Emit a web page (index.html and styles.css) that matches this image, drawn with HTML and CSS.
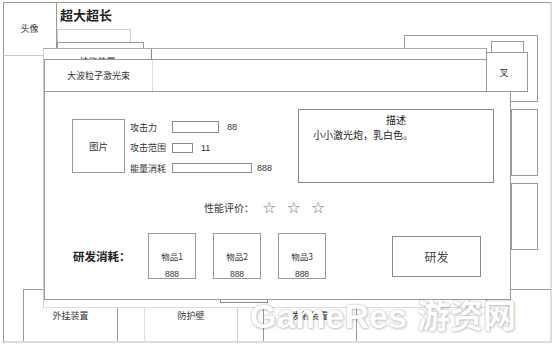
FILE: index.html
```html
<!DOCTYPE html>
<html lang="zh-CN">
<head>
<meta charset="UTF-8">
<title>研发界面</title>
<link rel="stylesheet" href="styles.css">
</head>
<body>
<div class="screen">
  <!-- main screen underneath -->
  <div class="frame"></div>
  <div class="avatar">头像</div>
  <h1 class="hero-name">超大超长</h1>
  <div class="name-bar"></div>
  <div class="level-bar"></div>

  <div class="side-panel side-top"></div>
  <div class="side-panel side-mid"></div>
  <div class="side-panel side-low"></div>

  <nav class="bottom-nav">
    <div class="nav-cell">外挂装置</div>
    <div class="nav-cell nav-gap"></div>
    <div class="nav-cell nav-light">防护壁</div>
    <div class="nav-cell"></div>
    <div class="nav-cell">发射装置</div>
    <div class="nav-cell nav-rest"></div>
  </nav>

  <!-- skill window behind the dialog -->
  <div class="back-window">
    <div class="back-tab">技能装置</div>
    <div class="back-slot"></div>
  </div>
  <div class="close-tab"></div>

  <!-- research dialog -->
  <div class="dialog">
    <div class="dialog-head">
      <div class="dialog-tab">大波粒子激光束</div>
    </div>
    <div class="dialog-body">
      <div class="info-row">
        <div class="pic">图片</div>
        <div class="stats">
          <div class="stat"><span class="stat-label">攻击力</span><span class="bar" style="width:47px;height:12px"></span><span class="stat-value">88</span></div>
          <div class="stat"><span class="stat-label">攻击范围</span><span class="bar" style="width:21px"></span><span class="stat-value">11</span></div>
          <div class="stat"><span class="stat-label">能量消耗</span><span class="bar" style="width:80px"></span><span class="stat-value short">888</span></div>
        </div>
        <div class="desc">
          <div class="desc-title">描述</div>
          <div class="desc-text">小小激光炮，乳白色。</div>
        </div>
      </div>

      <div class="rating">
        <span class="rating-label">性能评价：</span>
        <span class="star">☆</span><span class="star">☆</span><span class="star">☆</span>
      </div>

      <div class="cost-row">
        <div class="cost-label">研发消耗：</div>
        <div class="items">
          <div class="item"><div class="item-name">物品1</div><div class="item-num">888</div></div>
          <div class="item"><div class="item-name">物品2</div><div class="item-num">888</div></div>
          <div class="item"><div class="item-name">物品3</div><div class="item-num">888</div></div>
        </div>
        <button class="research-btn">研发</button>
      </div>
    </div>
  </div>
  <div class="close-btn">叉</div>

  <div class="watermark">GameRes<span class="wm-cn">游资网</span></div>
</div>
</body>
</html>
```

FILE: styles.css
```css
* {
  box-sizing: border-box;
}

body {
  margin: 0;
  background: #fff;
  font-family: "Noto Sans CJK SC", "Liberation Sans", sans-serif;
  color: #333;
}

.screen {
  position: relative;
  width: 554px;
  height: 346px;
  overflow: hidden;
}

/* main screen */
.frame {
  position: absolute;
  left: 3px;
  top: 2px;
  width: 549px;
  height: 341px;
  border-top: 1px solid #999;
  border-left: 1px solid #999;
  border-right: 2px solid #ddd;
  border-bottom: 2px solid #ddd;
}

.avatar {
  position: absolute;
  left: 3px;
  top: 2px;
  width: 54px;
  height: 54px;
  border-right: 1px solid #999;
  border-bottom: 1px solid #ccc;
  display: flex;
  align-items: center;
  justify-content: center;
  font-size: 9px;
}

.hero-name {
  position: absolute;
  left: 60px;
  top: 7px;
  margin: 0;
  font-size: 13px;
  line-height: 16px;
  font-weight: bold;
  color: #222;
}

.name-bar {
  position: absolute;
  left: 57px;
  top: 29px;
  width: 74px;
  height: 14px;
  border: 1px solid #ccc;
}

.level-bar {
  position: absolute;
  left: 57px;
  top: 42px;
  width: 87px;
  height: 20px;
  border: 1px solid #999;
  background: #fff;
}

.side-panel {
  position: absolute;
  border: 1px solid #999;
}

.side-top {
  left: 404px;
  top: 35px;
  width: 134px;
  height: 67px;
}

.side-mid {
  left: 511px;
  top: 109px;
  width: 27px;
  height: 67px;
}

.side-low {
  left: 511px;
  top: 183px;
  width: 27px;
  height: 67px;
}

.bottom-nav {
  position: absolute;
  left: 23px;
  top: 289px;
  width: 528px;
  height: 52px;
  border-top: 1px solid #999;
  border-left: 1px solid #999;
  display: grid;
  grid-template-columns: 94px 27px 93px 26px 93px 1fr;
}

.nav-cell {
  border-right: 1px solid #999;
  padding-top: 20px;
  font-size: 9px;
  line-height: 12px;
  text-align: center;
}

.nav-gap {
  border-right-color: #ddd;
}

.nav-light {
  border-right-color: #ccc;
}

.nav-rest {
  border-right: none;
}

/* window behind the dialog */
.back-window {
  position: absolute;
  left: 43px;
  top: 48px;
  width: 444px;
  height: 260px;
  background: #fff;
  border-top: 1px solid #aaa;
  border-left: 1px solid #ccc;
  border-right: 1px solid #999;
  border-bottom: 1px solid #ddd;
}

.back-tab {
  width: 108px;
  height: 20px;
  border-right: 1px solid #888;
  padding-top: 7px;
  font-size: 9px;
  line-height: 12px;
  text-align: center;
}

.back-slot {
  position: absolute;
  left: 176px;
  top: 236px;
  width: 48px;
  height: 18px;
  border: 1px solid #888;
}

.close-tab {
  position: absolute;
  left: 491px;
  top: 41px;
  width: 33px;
  height: 14px;
  border: 1px solid #999;
  background: #fff;
}

/* dialog */
.dialog {
  position: absolute;
  left: 44px;
  top: 59px;
  width: 467px;
  height: 241px;
  background: #fff;
  border: 1px solid #999;
}

.dialog-head {
  height: 32px;
  border-bottom: 1px solid #999;
  display: flex;
}

.dialog-tab {
  width: 108px;
  border-right: 1px solid #ddd;
  font-size: 9px;
  line-height: 31px;
  text-align: center;
}

.close-btn {
  position: absolute;
  left: 486px;
  top: 52px;
  width: 42px;
  height: 40px;
  background: #fff;
  border: 1px solid #999;
  display: flex;
  align-items: center;
  justify-content: center;
  padding-right: 6px;
  font-size: 9px;
}

.info-row {
  display: flex;
  align-items: flex-start;
  padding-top: 17px;
}

.pic {
  margin: 10px 0 0 27px;
  width: 53px;
  height: 54px;
  border: 1px solid #999;
  display: flex;
  align-items: center;
  justify-content: center;
  font-size: 9.5px;
}

.stats {
  margin: 8px 0 0 5px;
  font-size: 9px;
}

.stat {
  display: flex;
  align-items: center;
  height: 20.5px;
}

.stat-label {
  width: 42px;
}

.bar {
  display: inline-block;
  height: 10px;
  border: 1px solid #888;
}

.stat-value {
  margin-left: 8px;
  font-family: "Liberation Sans", sans-serif;
}

.stat-value.short {
  margin-left: 5px;
}

.desc {
  margin-left: auto;
  margin-right: 16px;
  width: 196px;
  height: 74px;
  border: 1px solid #888;
  padding-top: 4px;
  color: #222;
}

.desc-title {
  text-align: center;
  font-size: 10px;
  line-height: 12px;
  margin-bottom: 2px;
}

.desc-text {
  padding-left: 14px;
  font-size: 10px;
  line-height: 13px;
}

.rating {
  margin-top: 15px;
  padding-left: 159px;
  height: 18px;
  display: flex;
  align-items: center;
  font-size: 10px;
}

.rating-label {
  width: 58px;
}

.star {
  width: 24.5px;
  font-family: "DejaVu Sans", sans-serif;
  font-size: 16px;
  color: #777;
}

.cost-row {
  margin-top: 17px;
  height: 46px;
  display: flex;
  align-items: center;
}

.cost-label {
  margin-left: 28px;
  width: 75px;
  font-size: 11.5px;
  font-weight: bold;
  color: #222;
}

.items {
  display: flex;
  gap: 17px;
}

.item {
  width: 48px;
  height: 46px;
  border: 1px solid #999;
  padding-top: 16px;
  text-align: center;
  font-size: 8.5px;
}

.item-name {
  line-height: 12px;
  margin-bottom: 7px;
}

.item-num {
  line-height: 10px;
  font-family: "Liberation Sans", sans-serif;
}

.research-btn {
  margin-left: 66px;
  width: 89px;
  height: 41px;
  background: #fff;
  border: 1px solid #888;
  font-family: "Noto Sans CJK SC", sans-serif;
  font-size: 12px;
  color: #444;
}

.watermark {
  position: absolute;
  left: 250px;
  top: 294px;
  font-family: "Liberation Sans", sans-serif;
  font-size: 34px;
  line-height: 40px;
  font-weight: bold;
  color: #fff;
  text-shadow: 0 0 2px rgba(0, 0, 0, 0.3), 1px 1px 3px rgba(0, 0, 0, 0.18);
}

.wm-cn {
  margin-left: 10px;
  font-family: "Noto Sans CJK SC", sans-serif;
  font-size: 33px;
}
```
